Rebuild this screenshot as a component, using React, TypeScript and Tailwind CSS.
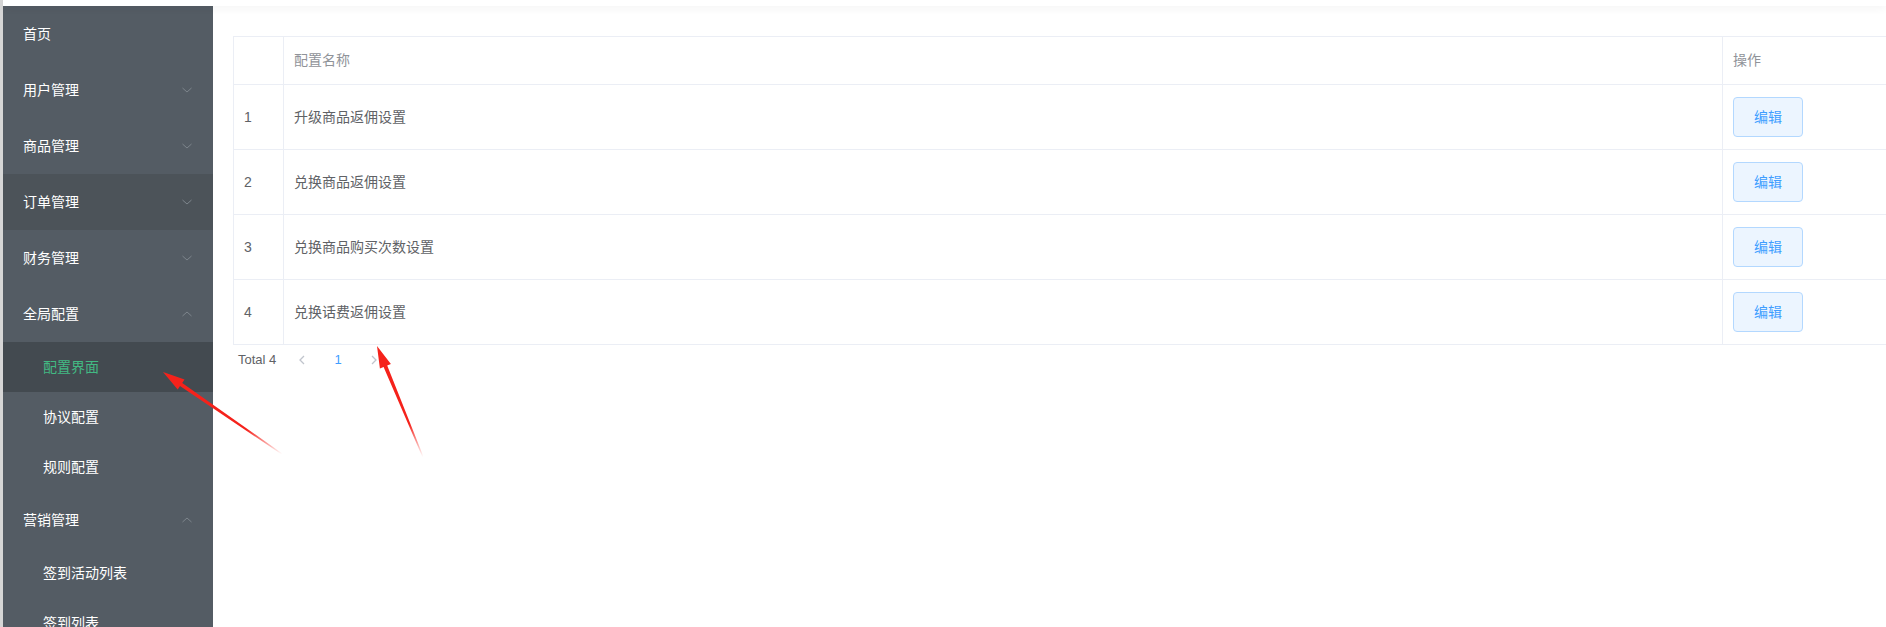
import React from "react";

const FONT = '"Liberation Sans", "Noto Sans CJK SC", sans-serif';

type MenuItem = {
  label: string;
  arrow?: "down" | "up";
  level: 1 | 2;
  active?: boolean;
  hover?: boolean;
};

const menu: MenuItem[] = [
  { label: "首页", level: 1 },
  { label: "用户管理", level: 1, arrow: "down" },
  { label: "商品管理", level: 1, arrow: "down" },
  { label: "订单管理", level: 1, arrow: "down", hover: true },
  { label: "财务管理", level: 1, arrow: "down" },
  { label: "全局配置", level: 1, arrow: "up" },
  { label: "配置界面", level: 2, active: true },
  { label: "协议配置", level: 2 },
  { label: "规则配置", level: 2 },
  { label: "营销管理", level: 1, arrow: "up" },
  { label: "签到活动列表", level: 2 },
  { label: "签到列表", level: 2 },
];

const rows = [
  { id: 1, name: "升级商品返佣设置" },
  { id: 2, name: "兑换商品返佣设置" },
  { id: 3, name: "兑换商品购买次数设置" },
  { id: 4, name: "兑换话费返佣设置" },
];

function Chevron({ dir }: { dir: "down" | "up" }) {
  return (
    <svg width="12" height="12" viewBox="0 0 12 12" className="shrink-0">
      {dir === "down" ? (
        <polyline points="1.5,4 6,8 10.5,4" fill="none" stroke="#7d858c" strokeWidth="1" />
      ) : (
        <polyline points="1.5,8 6,4 10.5,8" fill="none" stroke="#7d858c" strokeWidth="1" />
      )}
    </svg>
  );
}

function Sidebar() {
  return (
    <div className="w-[210px] shrink-0 bg-[#545c64] h-full overflow-hidden">
      {menu.map((m, i) => (
        <div
          key={i}
          className={
            m.level === 1
              ? `h-[56px] flex items-center justify-between pl-[20px] pr-[20px] text-[14px] text-white ${m.hover ? "bg-[#4c5359]" : ""}`
              : `h-[50px] flex items-center pl-[40px] text-[14px] ${m.active ? "bg-[#434a50] text-[#42b983]" : "text-white"}`
          }
        >
          <span>{m.label}</span>
          {m.arrow && <Chevron dir={m.arrow} />}
        </div>
      ))}
    </div>
  );
}

function Arrows() {
  return (
    <svg className="absolute inset-0 pointer-events-none" width="1886" height="627" viewBox="0 0 1886 627">
      <defs>
        <linearGradient id="g1" gradientUnits="userSpaceOnUse" x1="282" y1="454" x2="163" y2="372">
          <stop offset="0" stopColor="#f5221b" stopOpacity="0" />
          <stop offset="0.3" stopColor="#f5221b" stopOpacity="1" />
          <stop offset="1" stopColor="#f5221b" stopOpacity="1" />
        </linearGradient>
        <linearGradient id="g2" gradientUnits="userSpaceOnUse" x1="423" y1="457" x2="377" y2="346">
          <stop offset="0" stopColor="#f5221b" stopOpacity="0" />
          <stop offset="0.3" stopColor="#f5221b" stopOpacity="1" />
          <stop offset="1" stopColor="#f5221b" stopOpacity="1" />
        </linearGradient>
      </defs>
      <polygon
        fill="url(#g1)"
        points="163,372 184.5,379.6 182.2,382.9 282.3,453.6 281.7,454.4 180.0,386.1 177.7,389.4"
      />
      <polygon
        fill="url(#g2)"
        points="377,346 390.9,364.0 387.2,365.5 423.5,456.8 422.5,457.2 383.6,367.1 379.9,368.6"
      />
    </svg>
  );
}

function Table() {
  return (
    <div className="w-[1690px] border-l border-t border-[#ebeef5]">
      <div className="flex h-[48px] border-b border-[#ebeef5] text-[14px] text-[#909399]">
        <div className="w-[50px] shrink-0 border-r border-[#ebeef5]" />
        <div className="w-[1439px] shrink-0 border-r border-[#ebeef5] flex items-center pl-[10px]">配置名称</div>
        <div className="w-[200px] shrink-0 border-r border-[#ebeef5] flex items-center pl-[10px]">操作</div>
      </div>
      {rows.map((r) => (
        <div key={r.id} className="flex h-[65px] border-b border-[#ebeef5] text-[14px] text-[#606266]">
          <div className="w-[50px] shrink-0 border-r border-[#ebeef5] flex items-center pl-[10px]">{r.id}</div>
          <div className="w-[1439px] shrink-0 border-r border-[#ebeef5] flex items-center pl-[10px]">{r.name}</div>
          <div className="w-[200px] shrink-0 border-r border-[#ebeef5] flex items-center pl-[10px]">
            <button className="w-[70px] h-[40px] rounded-[4px] border border-[#b3d8ff] bg-[#ecf5ff] text-[#409eff] text-[14px] flex items-center justify-center">
              编辑
            </button>
          </div>
        </div>
      ))}
    </div>
  );
}

function Pagination() {
  return (
    <div className="h-[28px] mt-[1px] flex items-center pl-[5px] text-[13px] text-[#606266]">
      <span className="w-[46px]">Total 4</span>
      <span className="w-[36px] flex justify-center">
        <svg width="10" height="12" viewBox="0 0 10 12">
          <polyline points="7,2 3,6 7,10" fill="none" stroke="#c0c4cc" strokeWidth="1.3" />
        </svg>
      </span>
      <span className="w-[36px] flex justify-center text-[#409eff]">1</span>
      <span className="w-[36px] flex justify-center">
        <svg width="10" height="12" viewBox="0 0 10 12">
          <polyline points="3,2 7,6 3,10" fill="none" stroke="#c0c4cc" strokeWidth="1.3" />
        </svg>
      </span>
    </div>
  );
}

export default function App() {
  return (
    <div className="relative w-[1886px] h-[627px] overflow-hidden bg-white flex" style={{ fontFamily: FONT }}>
      <div className="w-[3px] shrink-0 bg-[#d6d6d6]" />
      <div className="flex-1 flex flex-col min-w-0">
        <div className="h-[6px] shrink-0 bg-white relative z-10 shadow-[0_2px_8px_rgba(0,0,0,0.06)]" />
        <div className="flex flex-1 min-h-0">
          <Sidebar />
          <div className="flex-1 min-w-0 overflow-hidden pl-[20px] pt-[30px]">
            <Table />
            <Pagination />
          </div>
        </div>
      </div>
      <Arrows />
    </div>
  );
}
